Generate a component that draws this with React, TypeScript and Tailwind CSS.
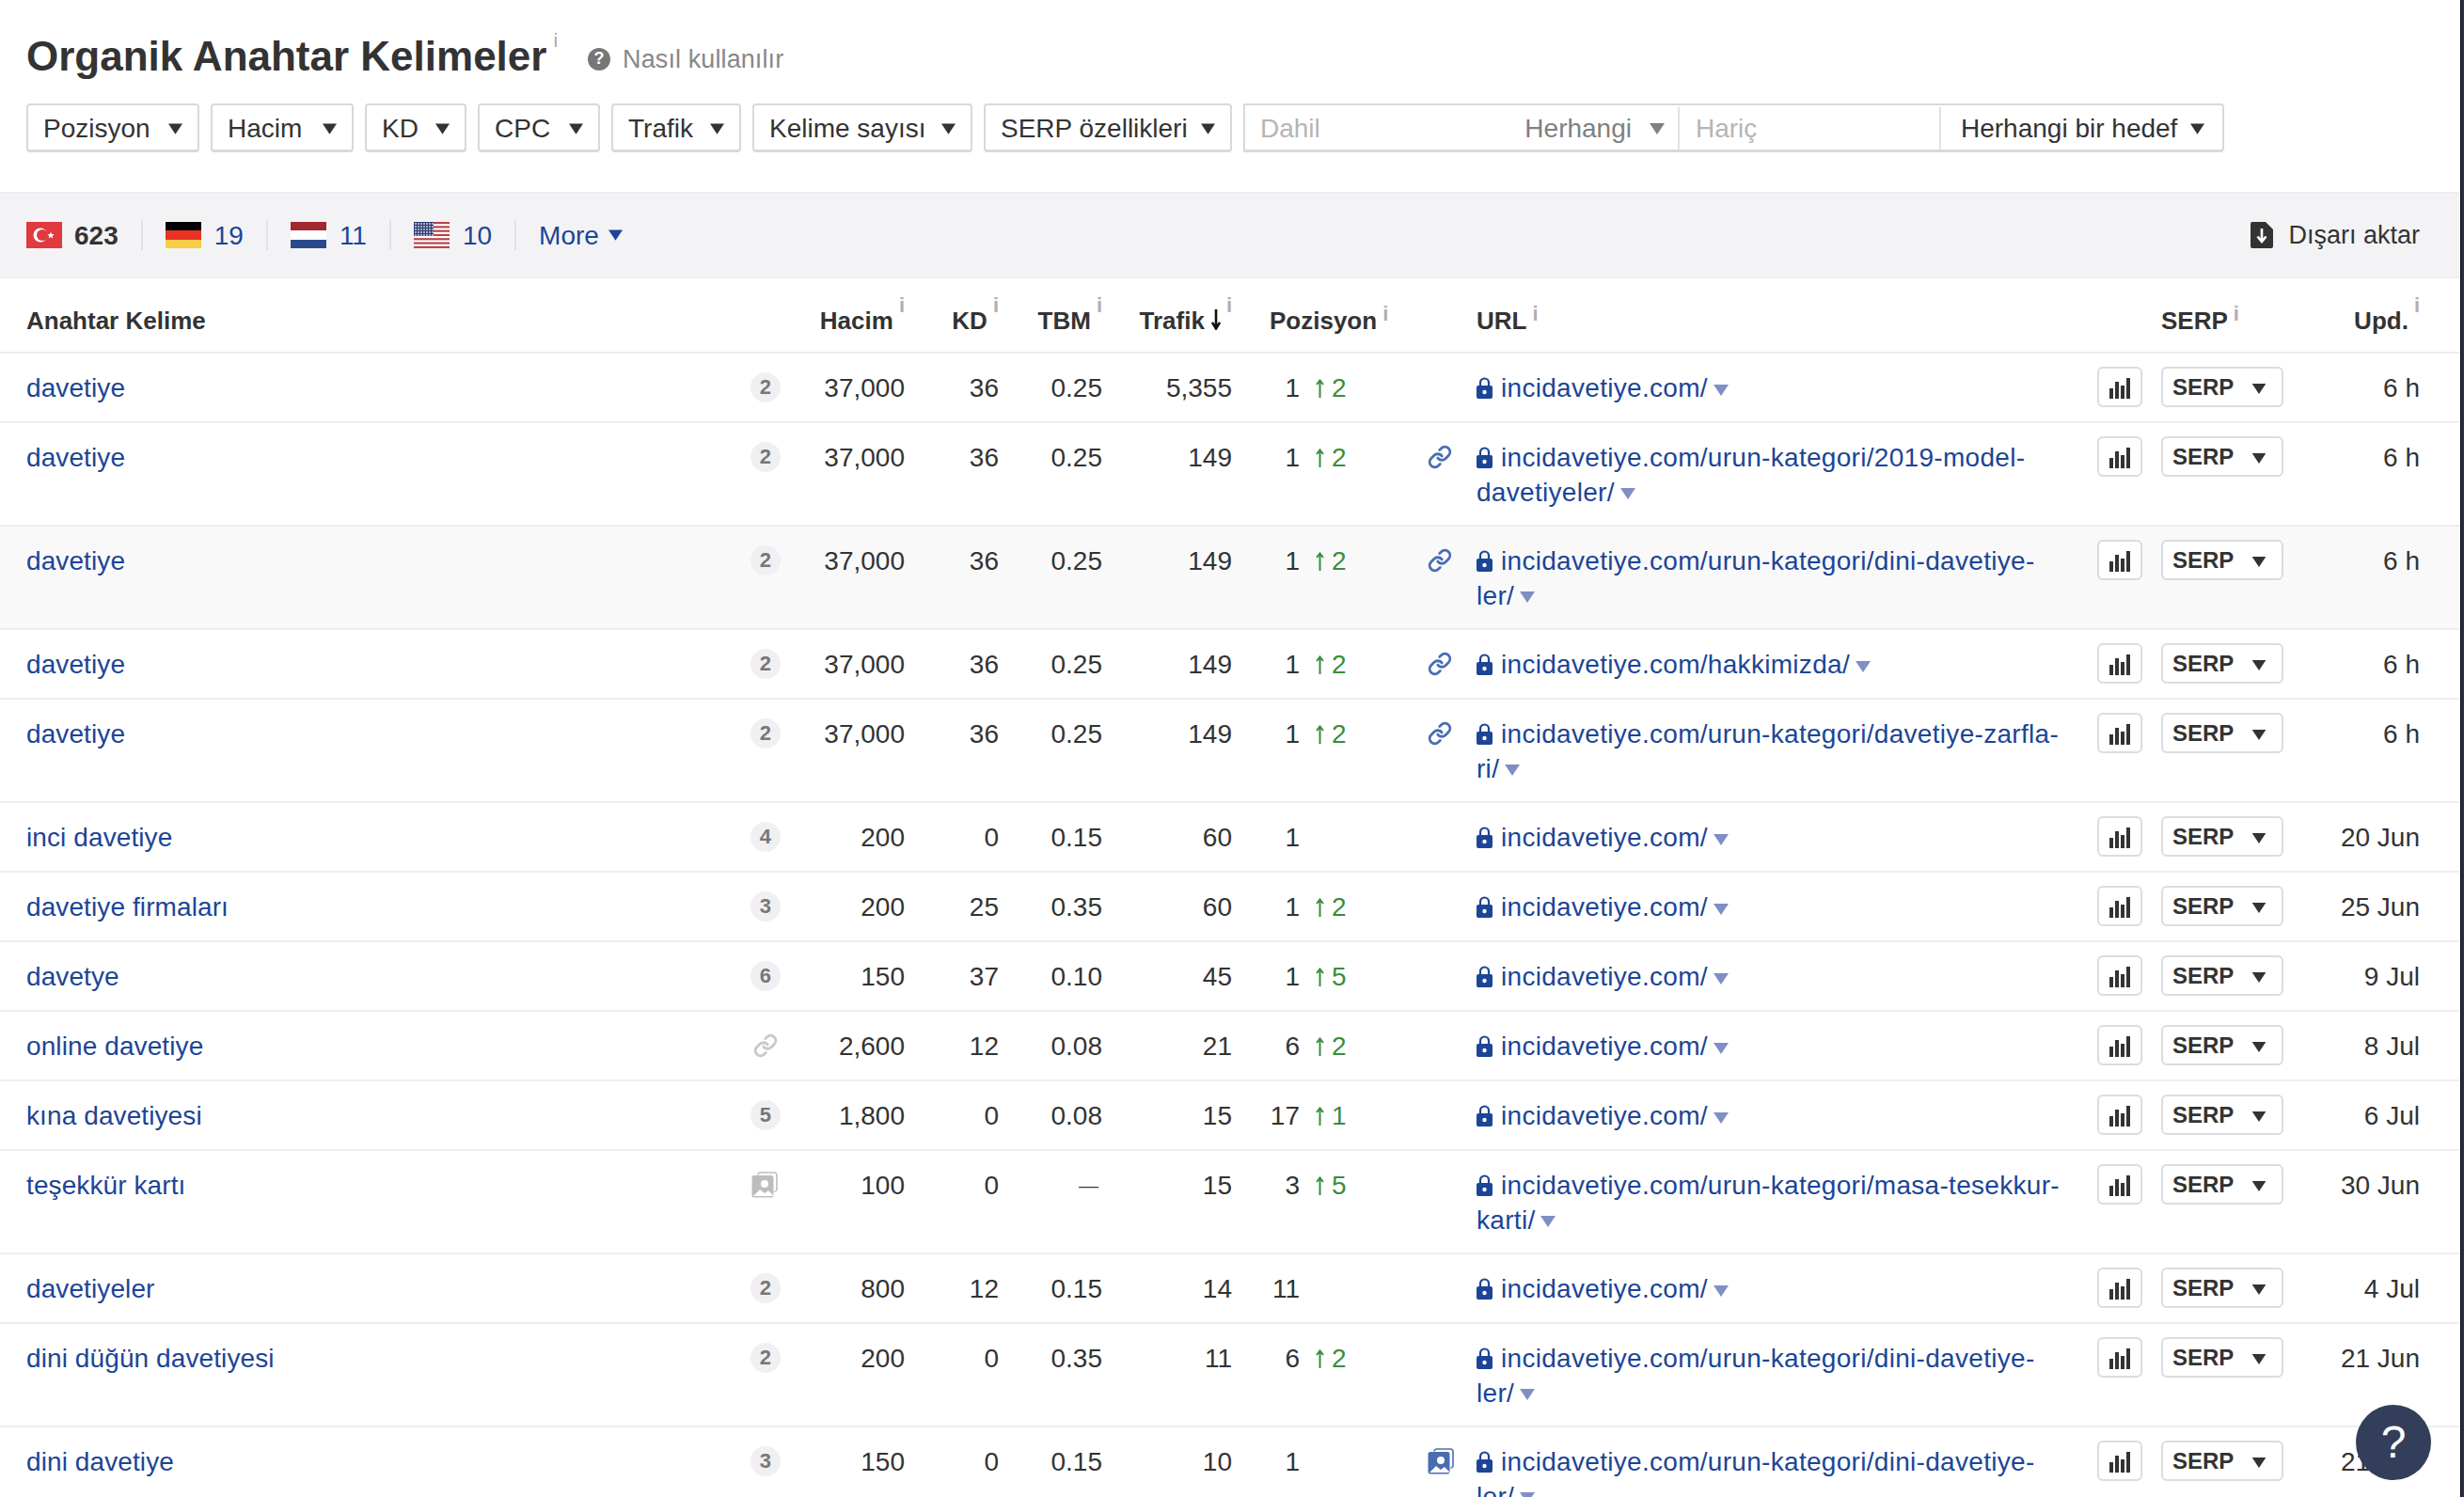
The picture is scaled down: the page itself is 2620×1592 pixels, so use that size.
import { Fragment } from "react";
import { Link } from "lucide-react";

interface Row {
  kw: string;
  badge: string;
  vol: string;
  kd: string;
  tbm: string;
  traffic: string;
  pos: string;
  change?: string;
  side?: "link" | "image";
  url: string;
  url2?: string;
  upd: string;
  hover?: boolean;
}

const rows: Row[] = [
  { kw: "davetiye", badge: "2", vol: "37,000", kd: "36", tbm: "0.25", traffic: "5,355", pos: "1", change: "2", url: "incidavetiye.com/", upd: "6 h" },
  { kw: "davetiye", badge: "2", vol: "37,000", kd: "36", tbm: "0.25", traffic: "149", pos: "1", change: "2", side: "link", url: "incidavetiye.com/urun-kategori/2019-model-", url2: "davetiyeler/", upd: "6 h" },
  { kw: "davetiye", badge: "2", vol: "37,000", kd: "36", tbm: "0.25", traffic: "149", pos: "1", change: "2", side: "link", url: "incidavetiye.com/urun-kategori/dini-davetiye-", url2: "ler/", upd: "6 h", hover: true },
  { kw: "davetiye", badge: "2", vol: "37,000", kd: "36", tbm: "0.25", traffic: "149", pos: "1", change: "2", side: "link", url: "incidavetiye.com/hakkimizda/", upd: "6 h" },
  { kw: "davetiye", badge: "2", vol: "37,000", kd: "36", tbm: "0.25", traffic: "149", pos: "1", change: "2", side: "link", url: "incidavetiye.com/urun-kategori/davetiye-zarfla-", url2: "ri/", upd: "6 h" },
  { kw: "inci davetiye", badge: "4", vol: "200", kd: "0", tbm: "0.15", traffic: "60", pos: "1", url: "incidavetiye.com/", upd: "20 Jun" },
  { kw: "davetiye firmaları", badge: "3", vol: "200", kd: "25", tbm: "0.35", traffic: "60", pos: "1", change: "2", url: "incidavetiye.com/", upd: "25 Jun" },
  { kw: "davetye", badge: "6", vol: "150", kd: "37", tbm: "0.10", traffic: "45", pos: "1", change: "5", url: "incidavetiye.com/", upd: "9 Jul" },
  { kw: "online davetiye", badge: "link", vol: "2,600", kd: "12", tbm: "0.08", traffic: "21", pos: "6", change: "2", url: "incidavetiye.com/", upd: "8 Jul" },
  { kw: "kına davetiyesi", badge: "5", vol: "1,800", kd: "0", tbm: "0.08", traffic: "15", pos: "17", change: "1", url: "incidavetiye.com/", upd: "6 Jul" },
  { kw: "teşekkür kartı", badge: "image", vol: "100", kd: "0", tbm: "—", traffic: "15", pos: "3", change: "5", url: "incidavetiye.com/urun-kategori/masa-tesekkur-", url2: "karti/", upd: "30 Jun" },
  { kw: "davetiyeler", badge: "2", vol: "800", kd: "12", tbm: "0.15", traffic: "14", pos: "11", url: "incidavetiye.com/", upd: "4 Jul" },
  { kw: "dini düğün davetiyesi", badge: "2", vol: "200", kd: "0", tbm: "0.35", traffic: "11", pos: "6", change: "2", url: "incidavetiye.com/urun-kategori/dini-davetiye-", url2: "ler/", upd: "21 Jun" },
  { kw: "dini davetiye", badge: "3", vol: "150", kd: "0", tbm: "0.15", traffic: "10", pos: "1", side: "image", url: "incidavetiye.com/urun-kategori/dini-davetiye-", url2: "ler/", upd: "21 Jun" },
];

const gridCols = "grid grid-cols-[830px_132px_100px_110px_138px_200px_60px_660px_48px_20px_130px_145px]";

function Caret({ className }: { className: string }) {
  return (
    <svg viewBox="0 0 16 12" className={className} fill="currentColor">
      <path d="M0 0h16L8 12z" />
    </svg>
  );
}

function Info() {
  return <span className="relative -top-[9px] ml-[6px] text-[22px] leading-none font-bold text-[#b0b0b0]">i</span>;
}

function FilterButton({ label, width }: { label: string; width: string }) {
  return (
    <button className={`flex items-center justify-between h-[52px] pt-[2px] pl-[16px] pr-[16px] bg-white border-2 border-b-[3px] border-[#d9d9d9] rounded-[4px] text-[28px] text-[#333] ${width}`}>
      {label}
      <Caret className="w-[15px] h-[12px] text-[#333]" />
    </button>
  );
}

function Separator() {
  return <span className="w-[2px] h-[32px] bg-[#e2e2e6]" />;
}

function ImageIcon({ className }: { className: string }) {
  return (
    <svg viewBox="0 0 28 28" className={className}>
      <path d="M7 3.500a2.500 2.500 0 0 1 2.500-2.500h15A2.500 2.500 0 0 1 27 3.500v15a2.500 2.500 0 0 1-2.500 2.500" fill="none" stroke="currentColor" strokeWidth="1.6" />
      <rect x="0.5" y="4" width="23" height="23.5" rx="2.5" fill="currentColor" />
      <circle cx="14" cy="13" r="4" fill="#fff" />
      <path d="M2 26l7-7 5 4 4-3 5 5v1H2z" fill="#fff" />
    </svg>
  );
}

function LockIcon() {
  return (
    <svg viewBox="0 0 17 23" className="inline-block w-[17px] h-[23px] mr-[9px] align-[-2px] text-[#1c4596]">
      <path d="M4 10V6a4.500 4.500 0 0 1 9 0v4" fill="none" stroke="currentColor" strokeWidth="2.2" />
      <rect x="0" y="9" width="17" height="14" rx="2" fill="currentColor" />
      <circle cx="8.5" cy="16" r="2.2" fill="#fff" />
    </svg>
  );
}

function ChartIcon() {
  return (
    <svg viewBox="0 0 22 22" className="w-[22px] h-[22px] mt-[2px] text-[#333]" fill="currentColor">
      <rect x="0" y="11" width="4" height="11" />
      <rect x="6" y="4" width="4" height="18" />
      <rect x="12" y="8" width="4" height="14" />
      <rect x="18" y="0" width="4" height="22" />
    </svg>
  );
}

function KeywordBadge({ value }: { value: string }) {
  if (value === "link") return <Link className="w-[26px] h-[26px] mr-[3px] text-[#c8c8c8]" strokeWidth={2.6} />;
  if (value === "image") return <ImageIcon className="w-[28px] h-[28px] mr-[3px] text-[#bdbdbd]" />;
  return (
    <span className="flex items-center justify-center w-[32px] h-[32px] rounded-full bg-[#f0f0f3] text-[22px] font-bold text-[#777]">
      {value}
    </span>
  );
}

function Flag({ code }: { code: string }) {
  if (code === "tr") {
    return (
      <svg viewBox="0 0 38 28" className="w-[38px] h-[28px]">
        <rect width="38" height="28" fill="#e0393e" />
        <circle cx="15" cy="14" r="7.5" fill="#fff" />
        <circle cx="17" cy="14" r="6" fill="#e0393e" />
        <path d="M26 10.500l1 2.600 2.800.1-2.200 1.700.8 2.700-2.400-1.600-2.300 1.600.8-2.700-2.200-1.700 2.800-.1z" fill="#fff" />
      </svg>
    );
  }
  if (code === "us") {
    const stripes = [0, 2, 4, 6, 8, 10, 12];
    return (
      <svg viewBox="0 0 38 28" className="w-[38px] h-[28px]">
        <rect width="38" height="28" fill="#fff" />
        {stripes.map((s) => (
          <rect key={s} y={s * 2.15} width="38" height="2.15" fill="#b4444a" />
        ))}
        <rect width="21" height="15" fill="#2f3a72" />
        {[2, 5, 8, 11, 14, 17, 20].map((x) =>
          [2, 5, 8, 11, 14].map((y) => <circle key={`${x}-${y}`} cx={x} cy={y} r="0.9" fill="#dfe2ee" />)
        )}
      </svg>
    );
  }
  const bands = code === "de" ? ["#000000", "#e93323", "#f7ce46"] : ["#a0282f", "#ffffff", "#2b4a8c"];
  return (
    <span className="flex flex-col w-[38px] h-[28px]">
      {bands.map((c) => (
        <span key={c} className="flex-1" style={{ backgroundColor: c }} />
      ))}
    </span>
  );
}

function TableRow({ row }: { row: Row }) {
  return (
    <div className={`${gridCols} items-start pt-[19px] border-b-2 border-[#eeeeee] text-[28px] leading-[36.5px] text-[#333] ${row.url2 ? "h-[110px]" : "h-[74px]"} ${row.hover ? "bg-[#f9f9f9]" : ""}`}>
      <div className="flex items-center justify-between pl-[28px] tracking-[0.1px] text-[#1c4596] h-[36.5px] -mt-[1px]">
        <span className="mt-[1px]">{row.kw}</span>
        <KeywordBadge value={row.badge} />
      </div>
      <div className="text-right">{row.vol}</div>
      <div className="text-right">{row.kd}</div>
      <div className={`text-right ${row.tbm === "—" ? "pr-[4px] text-[21px]" : ""}`}>{row.tbm}</div>
      <div className="text-right">{row.traffic}</div>
      <div className="flex">
        <span className="w-[72px] text-right">{row.pos}</span>
        {row.change && (
          <span className="flex items-center text-[#388e3c] ml-[17px]">
            <svg viewBox="0 0 9 20" className="w-[9px] h-[20px] mr-[8px]" fill="none" stroke="currentColor" strokeWidth="2">
              <path d="M4.500 20V2M1 6l3.500-4.500L8 6" />
            </svg>
            {row.change}
          </span>
        )}
      </div>
      <div className="flex justify-start pl-[8px] h-[36.5px] items-center -mt-[1px]">
        {row.side === "link" && <Link className="w-[26px] h-[26px] text-[#4a6db0]" strokeWidth={2.6} />}
        {row.side === "image" && <ImageIcon className="w-[28px] h-[28px] text-[#4a6db0]" />}
      </div>
      <div className="whitespace-nowrap tracking-[0.3px] text-[#1c4596]">
        <LockIcon />
        {row.url}
        {row.url2 && <br />}
        {row.url2}
        <Caret className="inline-block w-[16px] h-[12px] ml-[6px] text-[#7f8fc4]" />
      </div>
      <button className="flex items-center justify-center w-[48px] h-[43px] -mt-[5px] bg-white border-2 border-[#dcdce0] rounded-[6px]">
        <ChartIcon />
      </button>
      <span />
      <button className="flex items-center justify-between w-[130px] h-[43px] -mt-[5px] pl-[10px] pr-[16px] bg-white border-2 border-[#dcdce0] rounded-[6px] text-[24px] font-bold">
        <span className="mt-[1px]">SERP</span>
        <Caret className="w-[16px] h-[11px] mt-[3px] text-[#333]" />
      </button>
      <div className="text-right">{row.upd}</div>
    </div>
  );
}

const headers = [
  { label: "Hacim" },
  { label: "KD" },
  { label: "TBM" },
  { label: "Trafik", sorted: true },
];

export default function App() {
  return (
    <div className="relative h-[1592px] overflow-hidden bg-white border-r-[3px] border-[#26304a] font-['Liberation_Sans',Arial,sans-serif]">
      <div className="h-[1592px] border-r border-black">
        <div className="h-[204px] pt-[34px] px-[28px]">
          <div className="flex items-center h-[52px]">
            <h1 className="text-[44px] leading-[52px] font-bold text-[#333]">Organik Anahtar Kelimeler</h1>
            <span className="relative -top-[18px] ml-[7px] text-[21px] leading-none text-[#aaa]">i</span>
            <span className="flex items-center justify-center w-[24px] h-[24px] ml-[32px] mt-[5px] rounded-full bg-[#777] text-[18px] font-bold text-white">?</span>
            <span className="ml-[13px] mt-[6px] text-[27px] tracking-[0.1px] text-[#888]">Nasıl kullanılır</span>
          </div>
          <div className="flex items-center gap-[12px] mt-[24px]">
            <FilterButton label="Pozisyon" width="w-[184px]" />
            <FilterButton label="Hacim" width="w-[152px]" />
            <FilterButton label="KD" width="w-[108px]" />
            <FilterButton label="CPC" width="w-[130px]" />
            <FilterButton label="Trafik" width="w-[138px]" />
            <FilterButton label="Kelime sayısı" width="w-[234px]" />
            <FilterButton label="SERP özellikleri" width="w-[264px]" />
            <div className="flex w-[1043px] h-[52px] pt-[2px] bg-white border-2 border-b-[3px] border-[#d9d9d9] rounded-r-[4px] text-[28px]">
              <div className="flex items-center justify-between w-[462px] pl-[16px] pr-[14px] border-r-2 border-[#e2e2e2]">
                <span className="text-[#b5b5b5]">Dahil</span>
                <span className="flex items-center gap-[19px] ml-auto text-[#808080]">
                  Herhangi
                  <Caret className="w-[16px] h-[12px] text-[#808080]" />
                </span>
              </div>
              <div className="flex items-center w-[278px] pl-[17px] border-r-2 border-[#e2e2e2] text-[#b5b5b5]">Hariç</div>
              <div className="flex flex-1 items-center justify-between pl-[21px] pr-[19px] text-[#333]">
                Herhangi bir hedef
                <Caret className="w-[15px] h-[12px] text-[#333]" />
              </div>
            </div>
          </div>
        </div>

        <div className="flex items-center justify-between h-[92px] pl-[28px] pr-[43px] bg-[#f3f3f6] border-y-2 border-[#eeeef0] text-[28px]">
          <div className="flex items-center gap-[24px]">
            <span className="flex items-center gap-[13px] font-bold text-[#333]">
              <Flag code="tr" />
              <span className="mt-[1px]">623</span>
            </span>
            {[
              ["de", "19"],
              ["nl", "11"],
              ["us", "10"],
            ].map(([code, count]) => (
              <Fragment key={code}>
                <Separator />
                <span className="flex items-center gap-[14px] text-[#1c4596]">
                  <Flag code={code} />
                  <span className="mt-[1px]">{count}</span>
                </span>
              </Fragment>
            ))}
            <Separator />
            <span className="flex items-center gap-[10px] text-[#1c4596]">
              <span className="mt-[1px]">More</span>
              <Caret className="w-[15px] h-[12px] text-[#1c4596]" />
            </span>
          </div>
          <div className="flex items-center gap-[16px] text-[27px] text-[#333]">
            <svg viewBox="0 0 24 28" className="w-[24px] h-[28px]">
              <path d="M2 0h14l8 8v18a2 2 0 0 1-2 2H2a2 2 0 0 1-2-2V2a2 2 0 0 1 2-2z" fill="#333" />
              <path d="M12 7v13M7.500 15.500L12 21l4.500-5.500" fill="none" stroke="#fff" strokeWidth="2.6" />
            </svg>
            <span className="mt-[1px]">Dışarı aktar</span>
          </div>
        </div>

        <div className={`${gridCols} items-start h-[80px] pt-[27px] border-b-2 border-[#eeeeee] text-[26px] leading-[36.5px] font-bold text-[#333]`}>
          <div className="pl-[28px]">Anahtar Kelime</div>
          {headers.map((h) => (
            <div key={h.label} className="flex justify-end">
              {h.label}
              {h.sorted && (
                <svg viewBox="0 0 10 22" className="w-[10px] h-[22px] ml-[7px] mt-[6px]" fill="none" stroke="#111" strokeWidth="2.6">
                  <path d="M5 0v20M1 14l4 6.500L9 14" />
                </svg>
              )}
              <Info />
            </div>
          ))}
          <div className="pl-[40px]">
            Pozisyon
            <Info />
          </div>
          <span />
          <div>
            URL
            <Info />
          </div>
          <span />
          <span />
          <div>
            SERP
            <Info />
          </div>
          <div className="flex justify-end">
            Upd.
            <Info />
          </div>
        </div>

        {rows.map((row, i) => (
          <TableRow key={i} row={row} />
        ))}
      </div>

      <div className="absolute left-[2505px] top-[1494px] flex items-center justify-center w-[80px] h-[80px] rounded-full bg-[#333e5a] text-[48px] text-white">?</div>
    </div>
  );
}
